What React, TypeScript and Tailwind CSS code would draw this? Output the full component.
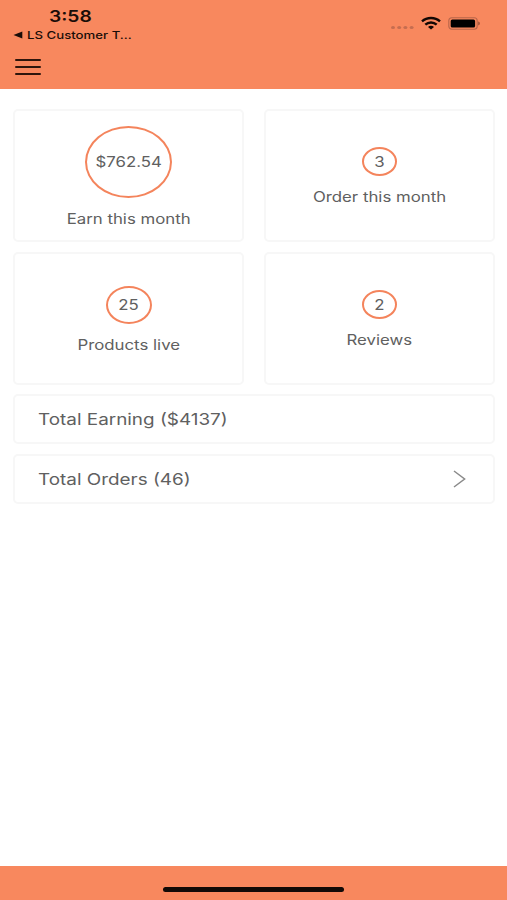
type Stat = {
  label: string;
  value: string;
  ring: string;
};

const stats: Stat[] = [
  { label: 'Earn this month', value: '$762.54', ring: 'w-[87px] h-[72px]' },
  { label: 'Order this month', value: '3', ring: 'w-[35px] h-[29px]' },
  { label: 'Products live', value: '25', ring: 'w-[46px] h-[38px]' },
  { label: 'Reviews', value: '2', ring: 'w-[35px] h-[29px]' },
];

function StatusBar() {
  return (
    <div className="flex h-11 justify-between">
      <div className="pl-[13px] pt-2">
        <div className="ml-9 origin-left scale-x-[1.2] text-base leading-[17px] font-semibold whitespace-nowrap">3:58</div>
        <div className="mt-1 flex items-center">
          <svg width="10" height="8" viewBox="0 0 10 8">
            <path d="M0.5 4 L9.3 0.4 V7.6 Z" fill="#1a0d08" />
          </svg>
          <span className="ml-[4px] origin-left scale-x-[1.2] text-[11px] leading-3 font-medium whitespace-nowrap">LS Customer T...</span>
        </div>
      </div>
      <div className="flex pt-[16px] pr-[27px]">
        <svg width="24" height="16" viewBox="0 0 24 16" fill="#c56d50">
          <ellipse cx="3" cy="11.5" rx="2" ry="1.6" />
          <ellipse cx="9.2" cy="11.5" rx="2" ry="1.6" />
          <ellipse cx="15.4" cy="11.5" rx="2" ry="1.6" />
          <ellipse cx="21.6" cy="11.5" rx="2" ry="1.6" />
        </svg>
        <svg className="ml-[7px]" width="20" height="14" viewBox="0 0 20 14" fill="none" stroke="#120805" strokeWidth="2.4">
          <path d="M1 5.4 C6 0.9 14 0.9 19 5.4" />
          <path d="M4.3 8.7 C7.6 5.7 12.4 5.7 15.7 8.7" />
          <path d="M7 11 C8.6 9.4 11.4 9.4 13 11 L10 13.6 Z" fill="#120805" stroke="none" />
        </svg>
        <svg className="ml-[7px]" width="32" height="14" viewBox="0 0 32 14">
          <rect x="0.8" y="1.7" width="28.4" height="11.6" rx="3" fill="none" stroke="#b8654a" strokeWidth="1.1" />
          <rect x="2.7" y="3.4" width="24.4" height="8.2" rx="1.6" fill="#000" />
          <path d="M30.3 5.6 C32.2 6.2 32.2 8.8 30.3 9.4 Z" fill="#8f4a33" />
        </svg>
      </div>
    </div>
  );
}

function StatCard({ label, value, ring }: Stat) {
  return (
    <div className="flex h-[133px] flex-col items-center justify-center gap-[14px] rounded-[5px] border-2 border-[#f7f7f7] bg-white">
      <div className={`flex items-center justify-center rounded-[50%] border-2 border-[#f4845c] ${ring}`}>
        <span className="scale-x-[1.2] text-sm leading-none">{value}</span>
      </div>
      <div className="scale-x-[1.2] text-sm leading-none whitespace-nowrap">{label}</div>
    </div>
  );
}

function TotalRow({ title, arrow }: { title: string; arrow?: boolean }) {
  return (
    <div className="flex h-[50px] items-center justify-between rounded-[5px] border-2 border-[#f7f7f7] bg-white pr-[27px] pl-[23px]">
      <span className="origin-left scale-x-[1.18] text-base whitespace-nowrap">{title}</span>
      {arrow && (
        <svg width="13" height="18" viewBox="0 0 13 18" fill="none" stroke="#8a8a8a" strokeWidth="1.5">
          <path d="M1 1 L11.6 9 L1 17" />
        </svg>
      )}
    </div>
  );
}

export default function App() {
  return (
    <div className="flex h-[900px] w-full flex-col bg-white font-['Inter',sans-serif] text-[#606060]">
      <header className="h-[89px] bg-[#f8885e] text-[#1a0d08]">
        <StatusBar />
        <button className="mt-[15px] ml-[15px] flex flex-col gap-[5px]" aria-label="Menu">
          <span className="h-[2px] w-[26px] rounded-full bg-[#2e150c]" />
          <span className="h-[2px] w-[26px] rounded-full bg-[#2e150c]" />
          <span className="h-[2px] w-[26px] rounded-full bg-[#2e150c]" />
        </button>
      </header>
      <main className="flex flex-1 flex-col gap-[10px] pt-5 pr-3 pl-[13px]">
        <div className="-mb-px grid grid-cols-2 gap-x-5 gap-y-[10px]">
          {stats.map((stat) => (
            <StatCard key={stat.label} {...stat} />
          ))}
        </div>
        <TotalRow title="Total Earning ($4137)" />
        <TotalRow title="Total Orders (46)" arrow />
      </main>
      <footer className="flex h-[34px] justify-center bg-[#f8885e] pt-[21px]">
        <div className="h-[5px] w-[181px] rounded-full bg-[#120a07]" />
      </footer>
    </div>
  );
}
